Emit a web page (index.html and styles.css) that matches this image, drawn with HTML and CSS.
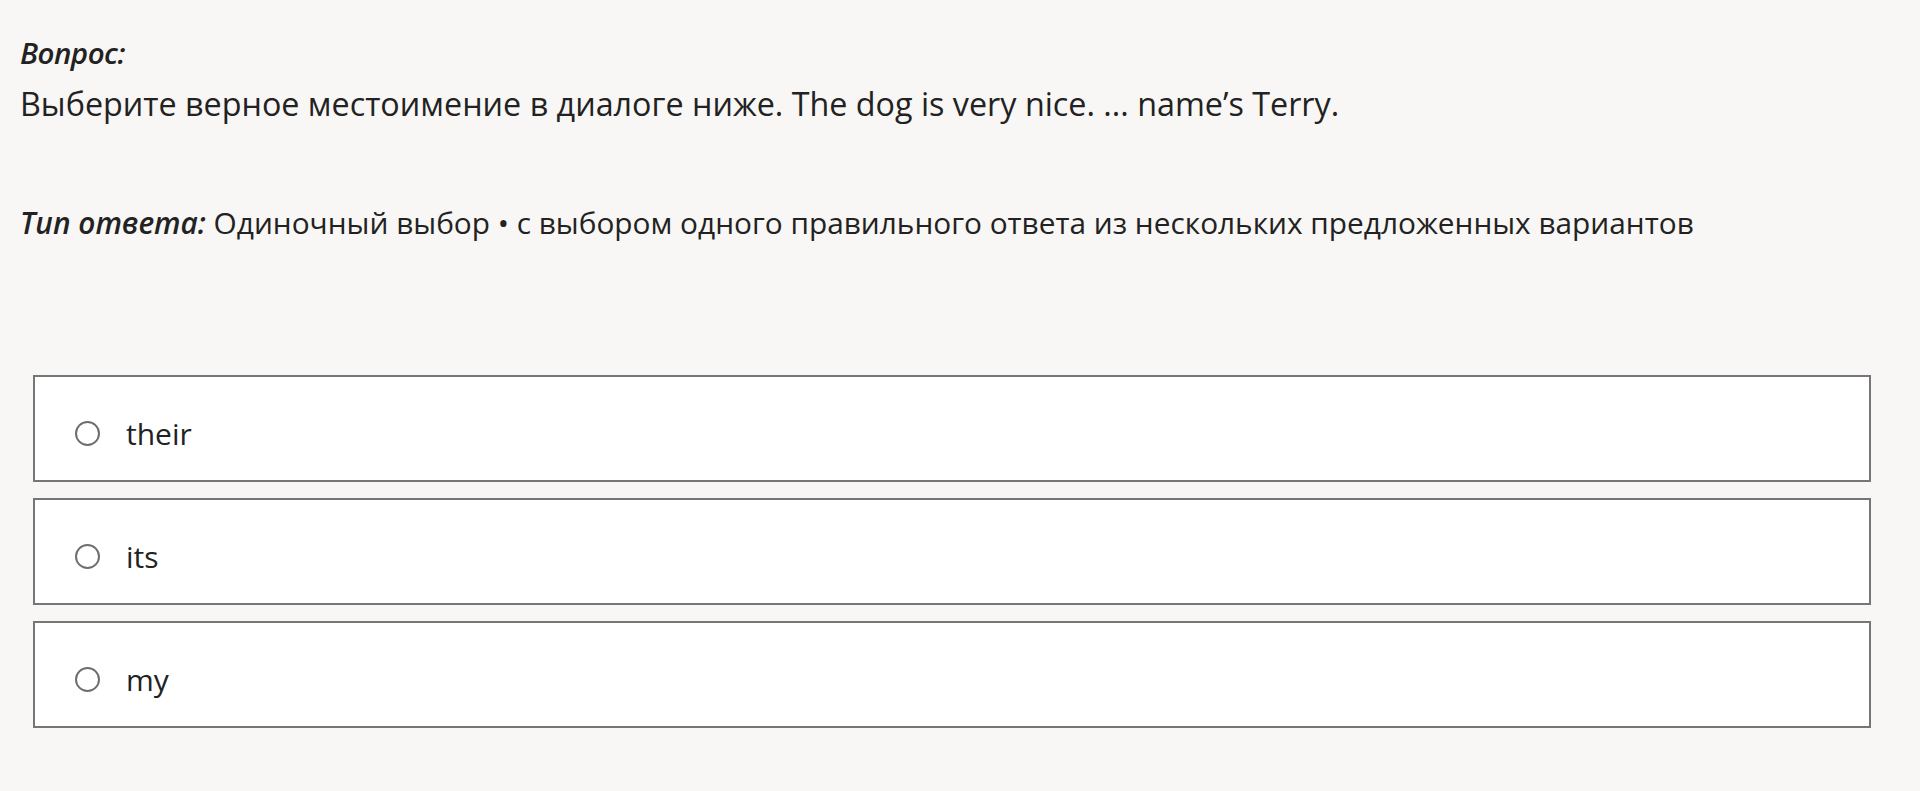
FILE: index.html
```html
<!DOCTYPE html>
<html lang="ru">

<head>
    <meta charset="UTF-8">
    <meta name="viewport" content="width=device-width, initial-scale=1.0">
    <title>Вопрос</title>
    <link rel="stylesheet" href="styles.css">
</head>

<body>
    <!-- Текст вопроса -->
    <div class="question">
        <div class="label">Вопрос:</div>
        <div class="question-text">Выберите верное местоимение в диалоге ниже. The dog is very nice. ... name’s Terry.</div>
    </div>

    <div class="answer-type">
        <span class="label">Тип ответа:</span> Одиночный выбор • с выбором одного правильного ответа из нескольких предложенных вариантов
    </div>

    <!-- Варианты ответа -->
    <div class="options">
        <label class="option">
            <span class="radio"></span>
            <span class="option-text">their</span>
        </label>
        <label class="option">
            <span class="radio"></span>
            <span class="option-text">its</span>
        </label>
        <label class="option">
            <span class="radio"></span>
            <span class="option-text">my</span>
        </label>
    </div>
</body>

</html>
```

FILE: styles.css
```css
/* Общие стили */
body {
    font-family: "Open Sans", "Noto Sans", sans-serif;
    background-color: #f8f7f5;
    color: #222;
    margin: 0;
    padding: 33px 20px 0 20px;
}

.label {
    font-weight: 600;
    font-style: italic;
}

.question .label {
    font-size: 29.5px;
    line-height: 40px;
    letter-spacing: -0.5px;
}

.question-text {
    font-size: 32.3px;
    line-height: 40px;
    margin-top: 10px;
}

.answer-type {
    font-size: 29.8px;
    line-height: 40px;
    margin-top: 80px;
}

/* Список вариантов */
.options {
    display: flex;
    flex-direction: column;
    gap: 16px;
    margin: 132px 29px 0 13px;
}

.option {
    display: flex;
    align-items: center;
    padding: 9px 0 0 40px;
    box-sizing: border-box;
    height: 107px;
    background-color: #fff;
    border: 2px solid #767676;
    cursor: pointer;
}

.radio {
    width: 25px;
    height: 25px;
    border: 2px solid #6e6e6e;
    border-radius: 50%;
    box-sizing: border-box;
}

.option-text {
    font-size: 30px;
    margin-left: 26px;
}
```
